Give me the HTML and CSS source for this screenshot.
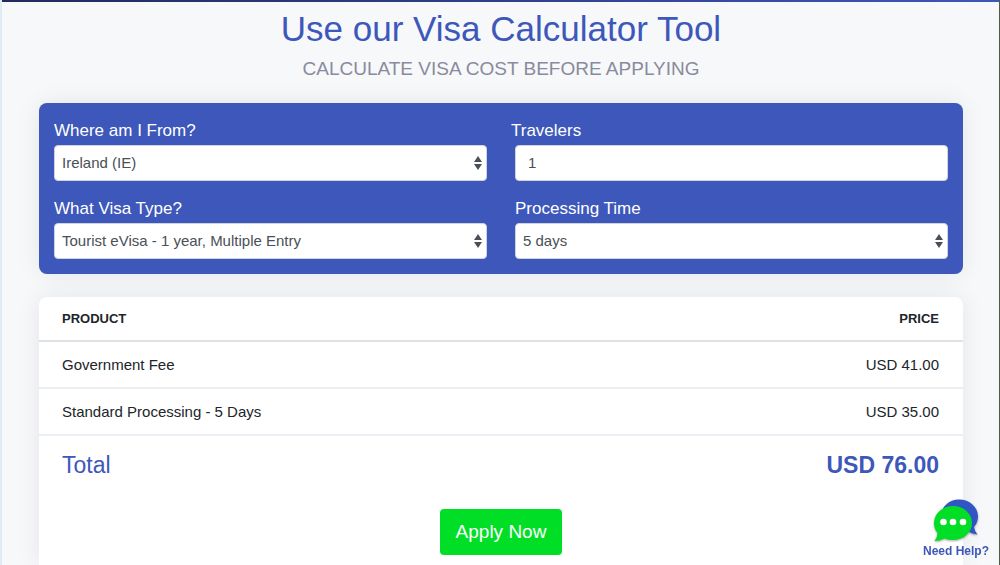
FILE: index.html
```html
<!DOCTYPE html>
<html lang="en">
<head>
<meta charset="UTF-8" />
<meta name="viewport" content="width=device-width, initial-scale=1" />
<title>Visa Calculator</title>
<link rel="stylesheet" href="styles.css">
</head>
<body>
  <main class="page">
    <header class="intro">
      <h1>Use our Visa Calculator Tool</h1>
      <p>CALCULATE VISA COST BEFORE APPLYING</p>
    </header>

    <form class="calculator">
      <div class="field">
        <label for="country">Where am I From?</label>
        <select id="country">
          <option>Ireland (IE)</option>
        </select>
      </div>
      <div class="field field-number">
        <label for="travelers">Travelers</label>
        <input id="travelers" type="text" inputmode="numeric" value="1" />
      </div>
      <div class="field">
        <label for="visa-type">What Visa Type?</label>
        <select id="visa-type">
          <option>Tourist eVisa - 1 year, Multiple Entry</option>
        </select>
      </div>
      <div class="field">
        <label for="processing">Processing Time</label>
        <select id="processing">
          <option>5 days</option>
        </select>
      </div>
    </form>

    <section class="summary">
      <table class="prices">
        <thead>
          <tr><th scope="col">PRODUCT</th><th scope="col">PRICE</th></tr>
        </thead>
        <tbody>
          <tr><td>Government Fee</td><td>USD 41.00</td></tr>
          <tr><td>Standard Processing - 5 Days</td><td>USD 35.00</td></tr>
        </tbody>
        <tfoot>
          <tr><td>Total</td><td>USD 76.00</td></tr>
        </tfoot>
      </table>
      <button class="apply" type="button">Apply Now</button>
    </section>
  </main>

  <a class="help" href="#help">
    <svg width="46" height="44" viewBox="0 0 46 44" aria-hidden="true">
      <path class="bubble-back" d="M26 0.500C36.500 0.500 45 8 45 17.500C45 22 43.500 25 41 28Q41.500 32 44.500 35.500Q38.500 35 34 31.500C22 36 8 29 8 17C8 8 16 0.500 26 0.500Z" />
      <path class="bubble-front" d="M20 7C30.500 7 39 14.500 39 24C39 33.500 30.500 41 20 41Q15 41 11.500 39.500Q7 42 1.500 42Q4.500 38.500 4.500 34C2.500 31.500 1 28 1 24.500C1 14.500 9.500 7 20 7Z" />
      <circle cx="10.500" cy="23" r="3.300" />
      <circle cx="20" cy="23" r="3.300" />
      <circle cx="30" cy="23" r="3.300" />
    </svg>
    <span>Need Help?</span>
  </a>
</body>
</html>
```

FILE: styles.css
```css
* {
  box-sizing: border-box;
}

body {
  margin: 0;
  background: #f6f8fa;
  font-family: "Liberation Sans", Arial, sans-serif;
  font-size: 15px;
  color: #212529;
}

.page {
  display: flex;
  flex-direction: column;
  min-height: 100vh;
  padding: 0 36px 0 37px;
  border-left: 2px solid #dfebf5;
  border-right: 1px solid #4b5d45;
  background: linear-gradient(90deg, #212a5c, #3d57ba) top / 100% 2px no-repeat;
}

/* Heading */
.intro {
  padding-top: 7px;
  text-align: center;
}

.intro h1 {
  margin: 0;
  font-size: 35px;
  font-weight: 400;
  line-height: 44px;
  color: #3d57ba;
}

.intro p {
  margin: 6px 0 22px;
  font-size: 19px;
  line-height: 24px;
  color: #8a8a9c;
}

/* Calculator form */
.calculator {
  display: grid;
  grid-template-columns: 1fr 1fr;
  gap: 17px 28px;
  padding: 17px 15px 15px;
  background: #3d57ba;
  border-radius: 8px;
  box-shadow: 0 0 24px rgba(0, 0, 0, 0.08);
}

.field label {
  display: block;
  margin-bottom: 3px;
  font-size: 17px;
  line-height: 22px;
  color: #fff;
}

.field select,
.field input {
  display: block;
  width: 100%;
  height: 36px;
  padding: 0 7px 1px;
  border: 1px solid #ced4da;
  border-radius: 4px;
  background-color: #fff;
  font: inherit;
  color: #495057;
}

.field select {
  appearance: none;
  background-image: url("data:image/svg+xml,%3Csvg xmlns='http://www.w3.org/2000/svg' viewBox='0 0 8 16'%3E%3Cpath fill='%23495057' d='M4 1L8 7H0zM4 15L0 9H8z'/%3E%3C/svg%3E");
  background-repeat: no-repeat;
  background-position: right 4px center;
  background-size: 8px 16px;
}

.field-number label {
  margin-left: -4px;
}

.field-number input {
  padding: 0 12px 1px;
}

/* Price summary */
.summary {
  display: flex;
  flex: 1;
  flex-direction: column;
  align-items: center;
  margin-top: 23px;
  padding-bottom: 10px;
  background: #fff;
  border-radius: 8px 8px 0 0;
  box-shadow: 0 0 24px rgba(0, 0, 0, 0.08);
}

.prices {
  width: 100%;
  border-collapse: separate;
  border-spacing: 0;
}

.prices th,
.prices td {
  height: 47px;
  padding: 0 24px 0 23px;
  border-bottom: 2px solid #ebeff4;
  text-align: left;
}

.prices th {
  height: 45px;
  border-color: #dee2e6;
  font-size: 13px;
}

.prices th:last-child,
.prices td:last-child {
  text-align: right;
}

.prices tfoot td {
  height: 58px;
  border: 0;
  font-size: 23px;
  color: #3d57ba;
}

.prices tfoot td:last-child {
  font-weight: 700;
}

.apply {
  margin-top: 15px;
  padding: 0 16px;
  height: 46px;
  border: 0;
  border-radius: 4px;
  background: #00df25;
  font-family: inherit;
  font-size: 19px;
  color: #fff;
  cursor: pointer;
}

/* Floating help link */
.help {
  position: fixed;
  right: 11px;
  bottom: 6px;
  display: flex;
  flex-direction: column;
  align-items: center;
  font-size: 12px;
  font-weight: 700;
  line-height: 16px;
  color: #3d57ba;
  text-decoration: none;
}

.help svg {
  filter: drop-shadow(0 1px 1px rgba(0, 0, 0, 0.35));
}

.bubble-back {
  fill: #3055c4;
}

.bubble-front {
  fill: #00df25;
}

.help circle {
  fill: #fff;
}
```
